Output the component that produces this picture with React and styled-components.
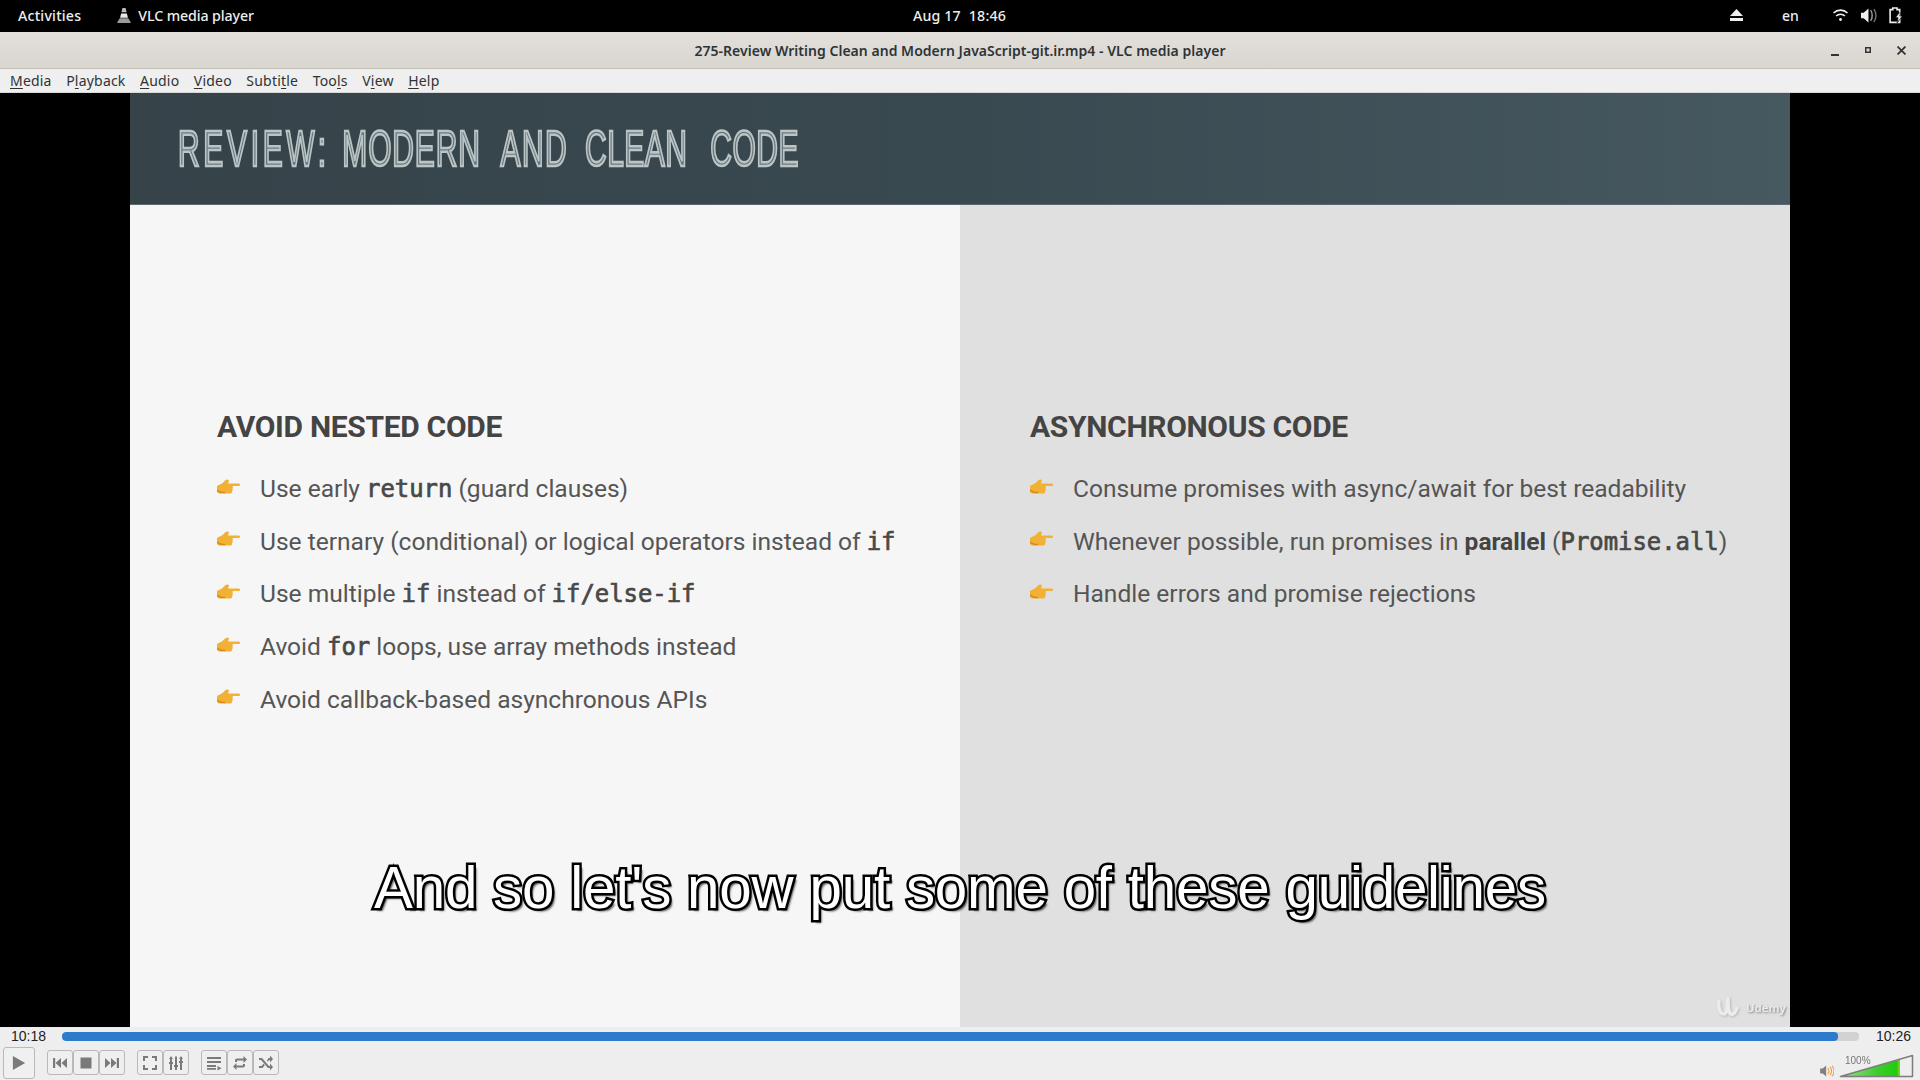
import React from "react";
import styled, { createGlobalStyle } from "styled-components";

const Global = createGlobalStyle`
  html, body { margin: 0; padding: 0; background: #000; }
  #root { width: 1920px; height: 1080px; overflow: hidden; }
`;
const Screen = styled.div`
  width: 1920px; height: 1080px; display: flex; flex-direction: column;
  font-family: "Noto Sans", sans-serif; overflow: hidden;
`;
const TopBar = styled.header`
  height: 32px; flex: none; box-sizing: border-box; padding-bottom: 2px; background: #000; color: #eeeeec;
  display: grid; grid-template-columns: 1fr auto 1fr; align-items: center;
  font-size: 14.2px; font-weight: 500;
`;
const TopLeft = styled.div`display: flex; align-items: center; padding-left: 18px; letter-spacing: 0.22px;`;
const AppName = styled.div`display: flex; align-items: center; gap: 7px; margin-left: 36px; letter-spacing: -0.1px;`;
const Clock = styled.div`display: flex; gap: 8px; letter-spacing: 0.15px; margin-left: -1px;`;
const TopRight = styled.div`display: flex; align-items: center; justify-content: flex-end; padding-right: 16px; color: #eee;`;
const Lang = styled.span`margin: 0 34px 0 39px; font-size: 14px; width: 16px;`;
const TrayIcons = styled.div`display: flex; align-items: center; gap: 12px;`;
const TitleBar = styled.div`
  height: 36px; flex: none; position: relative; display: flex; align-items: center; justify-content: center;
  background: linear-gradient(#e3e0dc, #d9d6d0); color: #2e3436; font-size: 14px; font-weight: 600; letter-spacing: 0.03px;
  border-bottom: 1px solid #c4bfb6; box-sizing: content-box;
`;
const WinButtons = styled.div`
  position: absolute; right: 14px; top: 0; height: 100%; display: flex; align-items: center; gap: 26px;
`;
const MenuBar = styled.nav`
  height: 23px; flex: none; background: #efefef; border-bottom: 1px solid #d8d8d8; display: flex; align-items: center;
  padding-left: 10px; gap: 14.5px; font-size: 14px; color: #2e3436; letter-spacing: 0.2px; margin-top: -1px; padding-top: 1px;
`;
const Mnemonic = styled.span`text-decoration: underline; text-underline-offset: 2px;`;
const Video = styled.main`
  flex: 1; min-height: 0; background: #000; display: flex; justify-content: center; position: relative;
`;
const Slide = styled.div`
  width: 1660px; display: flex; flex-direction: column; filter: blur(0.45px);
`;
const SlideHeader = styled.div`
  height: 112px; flex: none; display: flex; align-items: center; padding-left: 48px;
  background: linear-gradient(90deg, #364349 0%, #394950 50%, #465860 100%);
  border-bottom: 1px solid #5c686d; box-sizing: border-box;
`;
const SlideTitle = styled.h1`
  margin: 0; display: flex; font-family: "Liberation Sans", sans-serif; font-size: 50px; font-weight: 400; color: #67757a;
  -webkit-text-stroke: 2.6px #bcc5c6; transform: scaleX(0.6); transform-origin: left center; white-space: pre; line-height: 50px;
`;
const TitleWord = styled.span`
  letter-spacing: ${p => p.$track}px;
  margin-left: ${p => p.$gap}px;
`;
const Columns = styled.div`flex: 1; min-height: 0; display: grid; grid-template-columns: 1fr 1fr;`;
const Column = styled.section`
  background: ${p => p.$dark ? "#e0e0e0" : "#f6f6f6"};
  padding: 202px 0 0 ${p => p.$dark ? "70px" : "87px"};
`;
const Heading = styled.h2`
  margin: 0 0 15.5px; font-family: Roboto, sans-serif; font-size: 30px; line-height: 40px; font-weight: 700; color: #444; letter-spacing: -0.32px;
`;
const List = styled.ul`margin: 0; padding: 0; list-style: none;`;
const Item = styled.li`
  height: 52.6px; display: flex; align-items: center; gap: 19px;
  font-family: Roboto, sans-serif; font-size: 24.55px; color: #555; white-space: pre;
`;
const Code = styled.code`
  font-family: "DejaVu Sans Mono", monospace; font-size: 23.9px; font-weight: 400; color: #484848; -webkit-text-stroke: 0.7px #484848;
`;
const Strong = styled.strong`font-weight: 700; color: #444;`;
const Subtitle = styled.div`
  position: absolute; left: 0; right: 0; top: 755px; text-align: center; font-family: "Liberation Sans", sans-serif;
  font-size: 58.3px; line-height: 80px; color: #fff; -webkit-text-stroke: 5px #000; paint-order: stroke fill;
  text-shadow: 3px 3px 2px rgba(0,0,0,.6); white-space: pre; letter-spacing: -0.2px;
`;
const Watermark = styled.div`
  position: absolute; left: 1717px; top: 904px; display: flex; align-items: center; gap: 5px;
  color: #ececec; font-family: "Noto Sans", sans-serif; font-weight: 600; font-size: 11.500px; text-shadow: 1px 1px 2px rgba(0,0,0,.25);
  filter: drop-shadow(1px 1px 1px rgba(0,0,0,.18));
`;
const Controls = styled.footer`
  height: 53px; flex: none; background: #eeeeee; display: flex; flex-direction: column; color: #222;
`;
const SeekRow = styled.div`height: 18px; margin-bottom: 2px; flex: none; display: flex; align-items: center; padding: 0 7px 0 11px; font-family: "Liberation Sans", sans-serif; font-size: 14px;`;
const Time = styled.span`width: 51px; flex: none;`;
const TimeEnd = styled(Time)`width: 37px; margin-left: 17px;`;
const Track = styled.div`flex: 1; height: 9px; border-radius: 4px; background: #d2d2d2; overflow: hidden;`;
const Fill = styled.div`height: 100%; background: #2e7bcb; border-radius: 4px;`;
const ButtonRow = styled.div`flex: 1; display: flex; align-items: flex-start; padding: 0 5px 0 3px;`;
const PlayButton = styled.button`
  width: 32px; height: 32px; padding: 0; display: flex; align-items: center; justify-content: center;
  margin-right: 12px; border: 1px solid #b9b9b9; border-radius: 3px; background: #f0f0f0;
`;
const Group = styled.div`display: flex; margin: 3px 12px 0 0;`;
const SmallButton = styled.button`
  width: 26px; height: 25px; padding: 0; display: flex; align-items: center; justify-content: center;
  border: 1px solid #b9b9b9; border-radius: 3px; background: #efefef;
`;
const VolumeArea = styled.div`
  margin-left: auto; margin-top: 7px; display: flex; align-items: flex-end; gap: 5px; position: relative;
`;
const VolumeText = styled.span`
  position: absolute; left: 25px; top: 1px; font-family: "Liberation Sans", sans-serif; font-size: 10px; color: #777;
`;

const Cone = () => (
  <svg width="14" height="17" viewBox="0 0 13 16">
    <path d="M5 1h3l1 4H4z" fill="#bbb"/><path d="M3.800 6h5.400l1 4H2.800z" fill="#e8e8e8"/><path d="M1 13l1.500-2.500h8L12 13l1 2H0z" fill="#999"/>
  </svg>
);
const Eject = () => <svg width="13" height="14" viewBox="0 0 13 14" fill="#eee"><path d="M6.500 1L13 8H0z"/><rect y="10" width="13" height="3"/></svg>;
const Wifi = () => (
  <svg width="17" height="14" viewBox="0 0 16 14" fill="none" stroke="#eee" strokeWidth="1.600">
    <path d="M1 5a10 10 0 0 1 14 0"/><path d="M3.600 8a6.300 6.300 0 0 1 8.800 0"/><circle cx="8" cy="11.500" r="1.400" fill="#eee" stroke="none"/>
  </svg>
);
const Speaker = () => (
  <svg width="16" height="15" viewBox="0 0 15 14" fill="#eee">
    <path d="M0 4.500h2.500L7 .5v13l-4.500-4H0z"/><path d="M9 2c2 2.600 2 7.400 0 10" fill="none" stroke="#999" strokeWidth="1.400"/><path d="M12 1c2.700 3.400 2.700 8.600 0 12" fill="none" stroke="#777" strokeWidth="1.300"/>
  </svg>
);
const Battery = () => (
  <svg width="15" height="17" viewBox="0 0 14 16">
    <path d="M3.500 1h4v1.500H10V14.500H1V2.500h2.500z" fill="none" stroke="#eee" strokeWidth="1.500"/><path d="M9.500 5.500L6 10h2.500l-1 5 5-6.500H10l1-3z" fill="#eee" stroke="#000" strokeWidth=".6"/>
  </svg>
);
const Min = () => <svg width="8" height="8" viewBox="0 0 8 8" style={{ marginTop: 4 }}><rect y="6" width="8" height="2" fill="#333"/></svg>;
const Max = () => <svg width="6" height="6" viewBox="0 0 6 6"><rect x=".75" y=".75" width="4.500" height="4.500" fill="none" stroke="#333" strokeWidth="1.500"/></svg>;
const Close = () => <svg width="9" height="9" viewBox="0 0 8 8"><path d="M.5.5l7 7M7.500.5l-7 7" stroke="#333" strokeWidth="1.600"/></svg>;

const Hand = () => (
  <svg width="24" height="20" viewBox="0 0 24 20" style={{ flex: "none", marginTop: -2 }}>
    <path d="M8 2.500C9.500 1.500 11 1 12 2.500L11 5.500h11c1.400 0 1.400 2.600 0 2.600h-6.500c.6 1 .5 2-.1 2.600.6 1 .4 2-.4 2.500.3 1-.2 2.200-1.400 2.400H6.500C3 16 0 15.500 0 13.500V8C3 6.500 6 5 8 2.500z" fill="#f1b135"/>
    <path d="M0 12c2 2 5 2.500 8 2.500" stroke="#d8861c" strokeWidth="1.500" fill="none"/>
  </svg>
);

const G = "#7a7a7a";
const Ico = ({ children, w = 16, h = 16 }) => <svg width={w} height={h} viewBox="0 0 16 16" fill={G}>{children}</svg>;
const PlayI = () => <svg width="14" height="16" viewBox="0 0 16 18" fill={G}><path d="M1 1l14 8-14 8z"/></svg>;
const Prev = () => <Ico><rect x="1" y="3" width="2.200" height="10"/><path d="M9 3v10L3.500 8zM15 3v10L9.500 8z"/></Ico>;
const Stop = () => <Ico><rect x="2.500" y="2.500" width="11" height="11"/></Ico>;
const Next = () => <Ico><rect x="12.800" y="3" width="2.200" height="10"/><path d="M7 3v10l5.500-5zM1 3v10l5.500-5z"/></Ico>;
const Full = () => <Ico><path d="M1 1h5v2H3v3H1zM10 1h5v5h-2V3h-3zM1 10h2v3h3v2H1zM13 10h2v5h-5v-2h3z"/></Ico>;
const Eq = () => <Ico><path d="M2 4h2v11H2zM7 1.500h2V15H7zM12 4h2v11h-2z"/><path d="M1 7h4v2H1zM6 10h4v2H6zM11 6h4v2h-4zM3 1l2 3H1zM13 1l2 3h-4z"/></Ico>;
const PlaylistI = () => <Ico><path d="M1 2h14v2H1zM1 6h14v2H1zM1 10h9v2H1zM1 13h9v1.800H1zM11.500 11l4 2.200-4 2.200z"/></Ico>;
const Loop = () => <Ico><path d="M3 7V5.500A2 2 0 0 1 5 3.500h6.500V1l3.500 3.500L11.500 8V5.500H5V7zM13 9v1.500a2 2 0 0 1-2 2H4.500V15L1 11.500 4.500 8v2.500H11V9z"/></Ico>;
const Shuffle = () => <Ico><path d="M1 3h3l7 8h1V8.500l3 3.500-3 3.500V13h-2L3 5H1zM1 11h2.500l2-2.300 1.300 1.500L4.500 13H1zM9 5.500L10.500 3H12V.5L15 4l-3 3.500V5h-.8L9.800 6.700z"/></Ico>;

const VolIcon = () => (
  <svg width="14" height="12" viewBox="0 0 16 14" style={{ marginBottom: 1 }}>
    <path d="M0 4h3l4-3.500v13L3 10H0z" fill="#808080"/>
    <path d="M9 3.500c1.500 2 1.500 5 0 7M11.500 2c2.200 3 2.200 7 0 10M14 .8c2.800 3.800 2.800 8.600 0 12.400" stroke="#f39a26" strokeWidth="1.200" fill="none"/>
  </svg>
);
const VolBar = () => (
  <svg width="76" height="24" viewBox="0 0 76 24">
    <defs><linearGradient id="vg" x1="0" x2="1"><stop offset="0" stopColor="#9ede8e"/><stop offset=".6" stopColor="#40cc30"/><stop offset=".94" stopColor="#1fcc0e"/><stop offset="1" stopColor="#9acc22"/></linearGradient></defs>
    <path d="M2 22L61 5.500V22z" fill="url(#vg)"/>
    <path d="M1.500 22.500L73.500 1.500V22.500z" fill="none" stroke="#7d7d7d" strokeWidth="1.500" strokeLinejoin="round"/>
  </svg>
);

const U = () => (
  <svg width="24" height="20" viewBox="0 0 24 20" fill="none" stroke="#ececec" strokeWidth="3.500">
    <path d="M2 3c-1 8 1 14 5 14s3-14 4-15c0 8 0 14 3 15 3 1 5-2 6-7"/>
  </svg>
);

const m = (pre, ch, post) => <span>{pre}<Mnemonic>{ch}</Mnemonic>{post}</span>;

export default function App() {
  return (
    <Screen>
      <Global />
      <TopBar>
        <TopLeft>
          <span>Activities</span>
          <AppName><Cone />VLC media player</AppName>
        </TopLeft>
        <Clock><span>Aug 17</span><span>18:46</span></Clock>
        <TopRight>
          <Eject />
          <Lang>en</Lang>
          <TrayIcons><Wifi /><Speaker /><Battery /></TrayIcons>
        </TopRight>
      </TopBar>
      <TitleBar>
        275-Review Writing Clean and Modern JavaScript-git.ir.mp4 - VLC media player
        <WinButtons><Min /><Max /><Close /></WinButtons>
      </TitleBar>
      <MenuBar>
        {m("", "M", "edia")}{m("P", "l", "ayback")}{m("", "A", "udio")}{m("", "V", "ideo")}
        {m("Subti", "t", "le")}{m("Too", "l", "s")}{m("V", "i", "ew")}{m("", "H", "elp")}
      </MenuBar>
      <Video>
        <Slide>
          <SlideHeader>
            <SlideTitle>
              <TitleWord $track={6.1} $gap={0}>REVIEW:</TitleWord>
              <TitleWord $track={1.4} $gap={21}>MODERN</TitleWord>
              <TitleWord $track={2.4} $gap={33}>AND</TitleWord>
              <TitleWord $track={0.8} $gap={28}>CLEAN</TitleWord>
              <TitleWord $track={0.9} $gap={38}>CODE</TitleWord>
            </SlideTitle>
          </SlideHeader>
          <Columns>
            <Column>
              <Heading>AVOID NESTED CODE</Heading>
              <List>
                <Item><Hand /><span>Use early <Code>return</Code> (guard clauses)</span></Item>
                <Item><Hand /><span>Use ternary (conditional) or logical operators instead of <Code>if</Code></span></Item>
                <Item><Hand /><span>Use multiple <Code>if</Code> instead of <Code>if/else-if</Code></span></Item>
                <Item><Hand /><span>Avoid <Code>for</Code> loops, use array methods instead</span></Item>
                <Item><Hand /><span>Avoid callback-based asynchronous APIs</span></Item>
              </List>
            </Column>
            <Column $dark>
              <Heading>ASYNCHRONOUS CODE</Heading>
              <List>
                <Item><Hand /><span>Consume promises with async/await for best readability</span></Item>
                <Item><Hand /><span>Whenever possible, run promises in <Strong>parallel</Strong> (<Code>Promise.all</Code>)</span></Item>
                <Item><Hand /><span>Handle errors and promise rejections</span></Item>
              </List>
            </Column>
          </Columns>
        </Slide>
        <Subtitle>And so let's now put some of these guidelines</Subtitle>
        <Watermark><U />Udemy</Watermark>
      </Video>
      <Controls>
        <SeekRow>
          <Time>10:18</Time>
          <Track><Fill style={{ width: `${(618 / 626) * 100 + 0.1}%` }} /></Track>
          <TimeEnd>10:26</TimeEnd>
        </SeekRow>
        <ButtonRow>
          <PlayButton><PlayI /></PlayButton>
          <Group><SmallButton><Prev /></SmallButton><SmallButton><Stop /></SmallButton><SmallButton><Next /></SmallButton></Group>
          <Group><SmallButton><Full /></SmallButton><SmallButton><Eq /></SmallButton></Group>
          <Group><SmallButton><PlaylistI /></SmallButton><SmallButton><Loop /></SmallButton><SmallButton><Shuffle /></SmallButton></Group>
          <VolumeArea>
            <VolIcon />
            <VolBar />
            <VolumeText>100%</VolumeText>
          </VolumeArea>
        </ButtonRow>
      </Controls>
    </Screen>
  );
}
